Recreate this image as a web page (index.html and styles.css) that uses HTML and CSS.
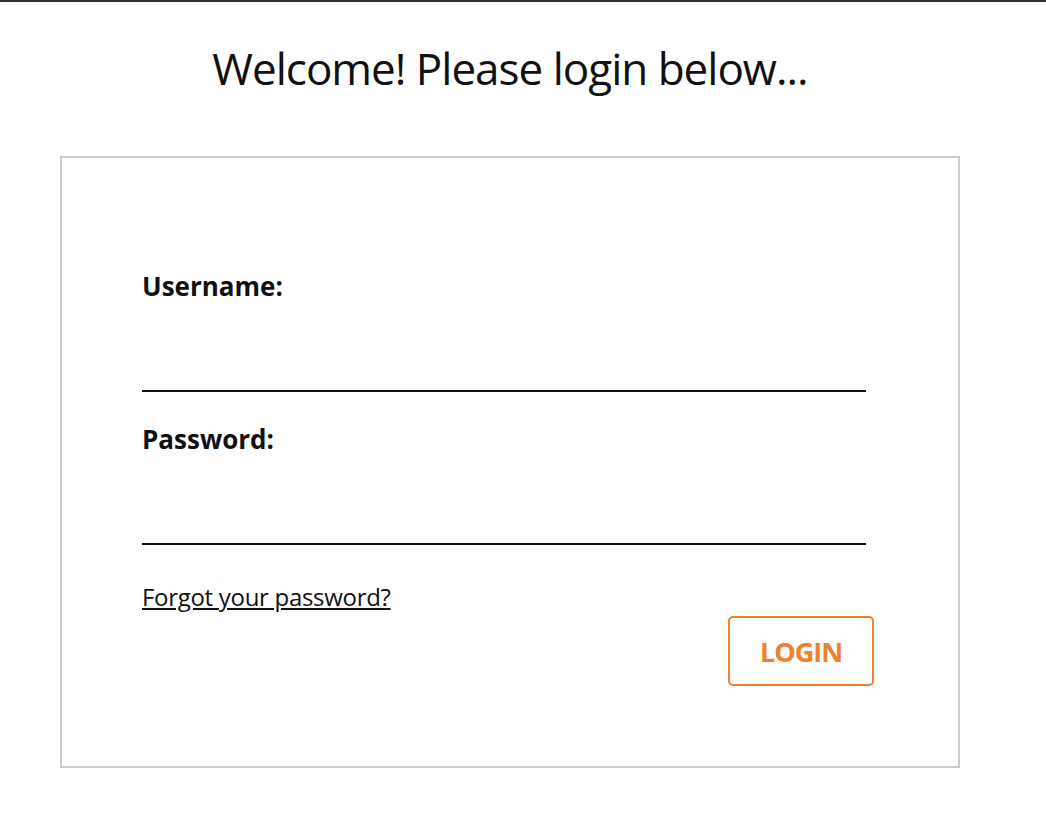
FILE: index.html
```html
<!DOCTYPE html>
<html lang="en">
<head>
    <meta charset="UTF-8">
    <title>Login</title>
    <link rel="stylesheet" href="styles.css">
</head>
<body>
    <h1>Welcome! Please login below...</h1>

    <form class="login-box" onsubmit="return false;">
        <div class="field">
            <label for="username">Username:</label>
            <input type="text" id="username" name="username">
        </div>

        <div class="field">
            <label for="password">Password:</label>
            <input type="password" id="password" name="password">
        </div>

        <a href="#" class="forgot">Forgot your password?</a>

        <div class="actions">
            <button type="submit">LOGIN</button>
        </div>
    </form>
</body>
</html>
```

FILE: styles.css
```css
* {
    margin: 0;
    padding: 0;
    box-sizing: border-box;
    font-family: 'Open Sans', 'Noto Sans', sans-serif;
}

body {
    background: #fff;
    border-top: 2px solid #333;
    color: #111;
}

h1 {
    text-align: center;
    font-weight: 400;
    font-size: 44px;
    line-height: 60px;
    margin: 36px 0 0 -26px;
    letter-spacing: -1px;
}

.login-box {
    width: 900px;
    margin: 58px 0 0 60px;
    border: 2px solid #ccc;
    padding: 112px 84px 80px 80px;
}

.field {
    width: 724px;
    margin-bottom: 31px;
}

.field label {
    display: block;
    font-weight: 700;
    font-size: 26px;
    line-height: 32px;
}

.field input {
    display: block;
    width: 100%;
    height: 90px;
    border: none;
    border-bottom: 2px solid #111;
    outline: none;
    font-size: 22px;
}

.forgot {
    display: inline-block;
    margin-top: 6px;
    color: #111;
    font-size: 24px;
    line-height: 30px;
    letter-spacing: -0.3px;
}

.actions {
    display: flex;
    justify-content: flex-end;
    margin-top: 4px;
}

button {
    width: 146px;
    height: 70px;
    background: #fff;
    border: 2px solid #ee8130;
    border-radius: 5px;
    color: #ee8130;
    font-weight: 700;
    font-size: 27px;
    letter-spacing: -1px;
    cursor: pointer;
}
```
